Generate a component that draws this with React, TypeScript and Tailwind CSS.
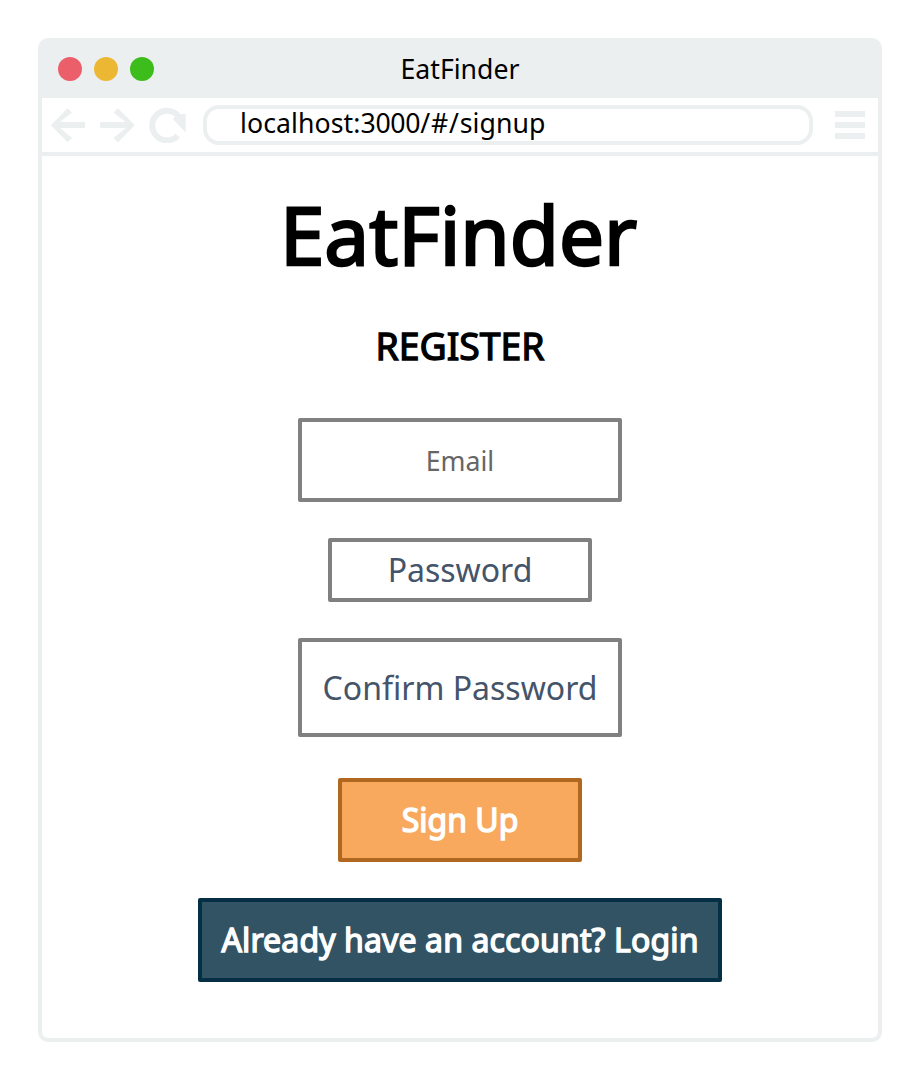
import React from "react";

function WindowControls() {
  return (
    <div className="flex flex-1 gap-3">
      <span className="size-6 rounded-full bg-[#eb5f6b]" />
      <span className="size-6 rounded-full bg-[#ecb833]" />
      <span className="size-6 rounded-full bg-[#3dbd1b]" />
    </div>
  );
}

function BackIcon() {
  return (
    <svg className="block h-9 w-[34px]" viewBox="51 107 34 36" fill="#ebeff0" aria-hidden="true">
      <path d="M51 125.2 67.5 108.2 72 112.4 59.8 122H85V128H59.8L72 138 67.5 142.2Z" />
    </svg>
  );
}

function ForwardIcon() {
  return (
    <svg className="block h-9 w-[35px]" viewBox="99.5 107 35 36" fill="#ebeff0" aria-hidden="true">
      <path d="M134.3 125.2 117.5 108.2 113 112.4 125.3 122H99.7V128H125.3L113 138 117.5 142.2Z" />
    </svg>
  );
}

function ReloadIcon() {
  return (
    <svg className="block h-9 w-[37px]" viewBox="149 107 37 36" aria-hidden="true">
      <path
        d="M177.8 115.4A14.8 14.8 0 1 0 177.8 135.7"
        fill="none"
        stroke="#ebeff0"
        strokeWidth="6"
      />
      <path d="M177 114H185.7V132.4L173 119.2Z" fill="#ebeff0" />
    </svg>
  );
}

function Field({ label, className }: { label: string; className: string }) {
  return (
    <div
      className={`flex items-center justify-center whitespace-nowrap rounded-[2px] border-4 border-[#808080] leading-none ${className}`}
    >
      {label}
    </div>
  );
}

export default function App() {
  return (
    <div className="h-[1081px] w-[921px] bg-white pl-[38px] pt-[38px] font-['Noto_Sans',sans-serif] text-black">
      <main className="flex h-[1004px] w-[844px] flex-col rounded-[10px] border-4 border-[#ebeff0] bg-white">
        <header className="flex h-14 shrink-0 items-center bg-[#ebeff0] px-4 pb-[3px]">
          <WindowControls />
          <span className="pt-0.5 text-[26.67px] leading-none">EatFinder</span>
          <div className="flex-1" />
        </header>

        <nav className="flex h-[58px] shrink-0 items-center border-b-4 border-[#ebeff0] pl-[9px] pr-[13px]">
          <BackIcon />
          <div className="ml-[14.5px]">
            <ForwardIcon />
          </div>
          <div className="ml-[14.5px]">
            <ReloadIcon />
          </div>
          <div className="ml-[17px] flex h-10 w-[610px] items-center rounded-2xl border-4 border-[#ebeff0] pb-[3px] pl-[33px] text-[26.67px] leading-none">
            <span className="tracking-[0.07px]">
              localhost:<span className="tracking-[-0.3px]">3000</span>
              <span className="tracking-[0.8px]">/#/</span>signup
            </span>
          </div>
          <div className="ml-[22px] flex flex-col gap-[5px]">
            <span className="h-1.5 w-[30px] bg-[#ebeff0]" />
            <span className="h-1.5 w-[30px] bg-[#ebeff0]" />
            <span className="h-1.5 w-[30px] bg-[#ebeff0]" />
          </div>
        </nav>

        <section className="flex flex-col items-center pt-[38px]">
          <h1 className="pr-[3px] text-[80px] leading-[80px] [-webkit-text-stroke:2.5px_black]">EatFinder</h1>
          <h2 className="mt-[52px] text-[37.33px] leading-10 [-webkit-text-stroke:1.3px_black]">REGISTER</h2>
          <Field label="Email" className="mt-[52px] h-[84px] w-[324px] pt-0.5 text-[26.67px] text-[#666666]" />
          <Field label="Password" className="mt-9 h-16 w-[264px] text-[32px] text-[#44546a]" />
          <Field label="Confirm Password" className="mt-9 h-[99px] w-[324px] text-[32px] text-[#44546a]" />
          <button className="mt-[41px] h-[84px] w-[244px] rounded-[2px] border-4 border-[#b06820] bg-[#f8a95d] text-[32px] leading-none text-white [-webkit-text-stroke:1.4px_white]">
            Sign Up
          </button>
          <button className="mt-9 h-[84px] w-[524px] whitespace-nowrap rounded-[2px] border-4 border-[#042f45] bg-[#325363] text-[32px] leading-none tracking-[0.13px] text-white [-webkit-text-stroke:1.4px_white]">
            Already have an account? Login
          </button>
        </section>
      </main>
    </div>
  );
}
